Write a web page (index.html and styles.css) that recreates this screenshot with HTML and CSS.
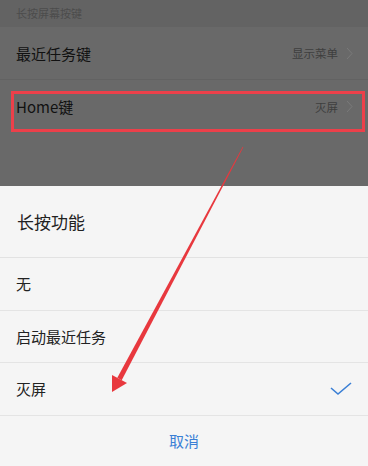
FILE: index.html
```html
<!DOCTYPE html>
<html lang="zh-CN">
<head>
<meta charset="utf-8">
<title>长按功能</title>
<link rel="stylesheet" href="styles.css">
</head>
<body>
<div class="screen">
  <div class="dim">
    <div class="group-title">长按屏幕按键</div>
    <div class="row">
      <span class="row-label">最近任务键</span>
      <span class="row-value">显示菜单
        <svg class="chev" width="7" height="13" viewBox="0 0 7 13"><path d="M1 1 L6 6.5 L1 12" fill="none" stroke="#7a7a7a" stroke-width="1"/></svg>
      </span>
    </div>
    <div class="row">
      <span class="row-label">Home键</span>
      <span class="row-value">灭屏
        <svg class="chev" width="7" height="13" viewBox="0 0 7 13"><path d="M1 1 L6 6.5 L1 12" fill="none" stroke="#7a7a7a" stroke-width="1"/></svg>
      </span>
    </div>
  </div>
  <div class="sheet">
    <div class="sheet-title">长按功能</div>
    <div class="option">无</div>
    <div class="option">启动最近任务</div>
    <div class="option selected">灭屏
      <svg class="check" width="22" height="14" viewBox="0 0 22 14"><path d="M1 6 L8 12 L21 1" fill="none" stroke="#3a7fd5" stroke-width="1.6"/></svg>
    </div>
    <div class="cancel">取消</div>
  </div>
  <svg class="annot" width="368" height="466" viewBox="0 0 368 466">
    <rect x="12.5" y="92.5" width="351" height="38" fill="none" stroke="#ec404a" stroke-width="3"/>
    <polygon points="243.3,147.2 242.7,146.8 117.3,377.8 121.7,380.2" fill="#e8383e"/>
    <polygon points="112,392 112,375 127,383" fill="#e8383e"/>
  </svg>
</div>
</body>
</html>
```

FILE: styles.css
```css
* { box-sizing: border-box; }
html, body {
  margin: 0;
  padding: 0;
}
body {
  width: 368px;
  height: 466px;
  overflow: hidden;
  font-family: "Noto Sans CJK SC", "Noto Sans", sans-serif;
}
.screen {
  position: relative;
  width: 368px;
  height: 466px;
  background: #f5f5f5;
}
.dim {
  height: 186px;
  background: #696969;
  display: flex;
  flex-direction: column;
}
.group-title {
  height: 27px;
  background: #636363;
  color: #4c4c4c;
  font-size: 11px;
  line-height: 27px;
  padding-left: 16px;
}
.row {
  height: 53px;
  display: flex;
  align-items: center;
  justify-content: space-between;
  padding: 0 15px 0 16px;
  border-bottom: 1px solid #626262;
}
.row + .row { border-bottom: none; }
.row-label {
  font-size: 15px;
  color: #111;
}
.row-value {
  display: flex;
  align-items: center;
  gap: 8px;
  font-size: 11.5px;
  color: #3e3e3e;
}
.chev { display: block; }
.sheet {
  height: 280px;
  display: flex;
  flex-direction: column;
}
.sheet-title {
  height: 72px;
  display: flex;
  align-items: center;
  padding-left: 17px;
  font-size: 17px;
  color: #222;
  border-bottom: 1px solid #e2e2e2;
}
.option {
  height: 52.5px;
  display: flex;
  align-items: center;
  justify-content: space-between;
  padding: 0 16px 0 16px;
  font-size: 15px;
  color: #222;
  border-bottom: 1px solid #e4e4e4;
}
.check { display: block; }
.cancel {
  flex: 1;
  display: flex;
  align-items: center;
  justify-content: center;
  font-size: 15px;
  color: #3a7fd5;
}
.annot {
  position: absolute;
  left: 0;
  top: 0;
  pointer-events: none;
}
```
